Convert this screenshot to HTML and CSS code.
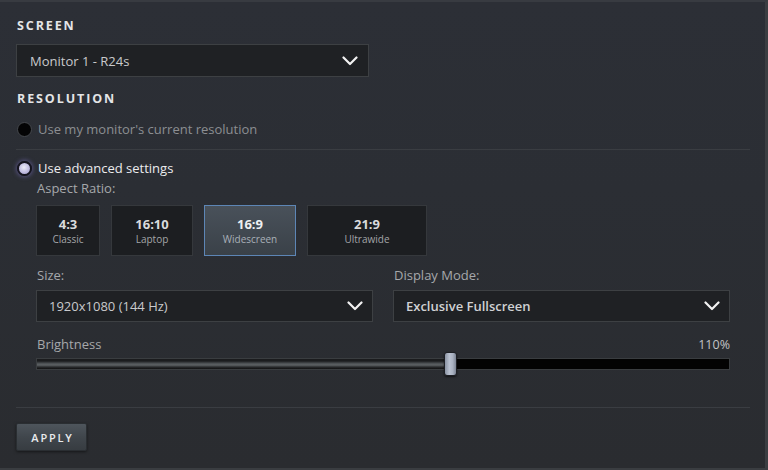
FILE: index.html
```html
<!DOCTYPE html>
<html>
<head>
<meta charset="utf-8">
<link rel="stylesheet" href="styles.css">
</head>
<body>
<div class="panel">
  <div class="heading">SCREEN</div>
  <div class="select select-screen">
    <span>Monitor 1 - R24s</span>
    <svg class="chev" width="16" height="10" viewBox="0 0 16 10"><path d="M1.5 1.5 L8 8 L14.5 1.5" fill="none" stroke="#f2f2f2" stroke-width="2.2" stroke-linecap="round" stroke-linejoin="round"/></svg>
  </div>
  <div class="heading heading-res">RESOLUTION</div>
  <div class="radio-row row-current">
    <span class="radio radio-off"></span>
    <span class="radio-label dim">Use my monitor's current resolution</span>
  </div>
  <div class="sep sep-top"></div>
  <div class="radio-row row-adv">
    <span class="radio radio-on"></span>
    <span class="radio-label">Use advanced settings</span>
  </div>
  <div class="advanced">
    <div class="label">Aspect Ratio:</div>
    <div class="ratios">
      <div class="ratio r43"><b>4:3</b><span>Classic</span></div>
      <div class="ratio r1610"><b>16:10</b><span>Laptop</span></div>
      <div class="ratio r169 selected"><b>16:9</b><span>Widescreen</span></div>
      <div class="ratio r219"><b>21:9</b><span>Ultrawide</span></div>
    </div>
    <div class="two-col">
      <div class="col">
        <div class="label">Size:</div>
        <div class="select select-small">
          <span>1920x1080 (144 Hz)</span>
          <svg class="chev" width="16" height="10" viewBox="0 0 16 10"><path d="M1.5 1.5 L8 8 L14.5 1.5" fill="none" stroke="#f2f2f2" stroke-width="2.2" stroke-linecap="round" stroke-linejoin="round"/></svg>
        </div>
      </div>
      <div class="col">
        <div class="label">Display Mode:</div>
        <div class="select select-small">
          <span class="strong">Exclusive Fullscreen</span>
          <svg class="chev" width="16" height="10" viewBox="0 0 16 10"><path d="M1.5 1.5 L8 8 L14.5 1.5" fill="none" stroke="#f2f2f2" stroke-width="2.2" stroke-linecap="round" stroke-linejoin="round"/></svg>
        </div>
      </div>
    </div>
    <div class="slider-head">
      <span class="label">Brightness</span>
      <span class="pct">110%</span>
    </div>
    <div class="track">
      <div class="fill" style="width: 59.5%"></div>
      <div class="thumb" style="left: 59.5%"></div>
    </div>
  </div>
  <div class="sep sep-bottom"></div>
  <button class="apply">APPLY</button>
</div>
</body>
</html>
```
FILE: styles.css
```css
* { box-sizing: border-box; }
html, body { margin: 0; padding: 0; }
body {
  width: 768px;
  height: 470px;
  overflow: hidden;
  background: #2b2d32;
  font-family: "Open Sans", "Noto Sans", sans-serif;
}
.panel {
  width: 768px;
  height: 470px;
  padding: 17px 0 0 16px;
  background: linear-gradient(180deg, #2c2f36 0%, #2b2e34 40%, #2a2c30 100%);
  border-top: 2px solid #383b41;
  border-right: 3px solid #3b3e42;
  border-bottom: 2px solid #3a3d41;
  position: relative;
}
.heading {
  height: 18px;
  line-height: 18px;
  font-size: 12.5px;
  font-weight: 700;
  letter-spacing: 1.9px;
  color: #e4e5e7;
  margin-top: -2px;
  padding-left: 1px;
}
.select {
  display: flex;
  align-items: center;
  justify-content: space-between;
  background: #1f2124;
  border: 1px solid #3d4043;
  color: #c9cacc;
  font-size: 13px;
}
.select-screen {
  width: 353px;
  height: 33px;
  margin-top: 9px;
  padding: 0 10px 0 13px;
}
.select-small {
  height: 32px;
  padding: 0 9px 0 12px;
  margin-top: 6px;
}
.select .strong { font-weight: 600; color: #d0d1d3; }
.chev { display: block; }
.heading-res { margin-top: 13px; }
.radio-row {
  display: flex;
  align-items: center;
  height: 18px;
  gap: 6px;
  padding-left: 1px;
}
.row-current { margin-top: 12px; }
.row-adv { margin-top: 9px; }
.radio {
  width: 15px;
  height: 15px;
  border-radius: 50%;
  flex: none;
}
.radio-off {
  background: #040405;
  border: 1.5px solid #45484d;
}
.radio-on {
  background: radial-gradient(circle at 45% 40%, #ecebf8 0%, #c9c5e6 45%, #9d97c7 100%);
  border: 2px solid #15141f;
  box-shadow: 0 0 4px 1px rgba(120, 110, 190, 0.55);
}
.radio-label {
  font-size: 13px;
  color: #ececee;
}
.radio-label.dim { color: #8c8e92; }
.sep {
  width: 734px;
  height: 1px;
  background: #3a3d42;
}
.sep-top { margin-top: 11px; }
.advanced {
  padding-left: 20px;
  width: 714px;
}
.label {
  height: 18px;
  line-height: 18px;
  font-size: 13px;
  color: #a6a8ab;
  padding-left: 1px;
}
.advanced > .label:first-child { margin-top: 2px; }
.ratios {
  display: flex;
  gap: 11px;
  margin-top: 8px;
}
.ratio {
  height: 51px;
  display: flex;
  flex-direction: column;
  align-items: center;
  justify-content: center;
  background: #1c1e21;
  border: 1px solid #35383c;
  padding-top: 1px;
}
.ratio b {
  font-size: 13px;
  font-weight: 700;
  color: #d9dadc;
  line-height: 16px;
}
.ratio span {
  font-size: 10px;
  color: #a3a5a8;
  line-height: 14px;
}
.r43 { width: 64px; }
.r1610 { width: 82px; }
.r169 { width: 92px; }
.r219 { width: 120px; }
.ratio.selected {
  background: linear-gradient(180deg, #49515a 0%, #3a4148 100%);
  border-color: #5d86b6;
}
.ratio.selected b { color: #eef0f2; }
.ratio.selected span { color: #a9b0b8; }
.two-col {
  display: grid;
  grid-template-columns: 337px 337px;
  gap: 20px;
  margin-top: 10px;
}
.slider-head {
  display: flex;
  justify-content: space-between;
  align-items: center;
  height: 18px;
  margin-top: 13px;
}
.pct {
  font-size: 12.5px;
  color: #c2c3c5;
}
.track {
  position: relative;
  height: 12px;
  margin-top: 5px;
  background: #030303;
  border: 1px solid #3a3d40;
}
.fill {
  height: 100%;
  background: linear-gradient(180deg, #1b1c1e 0%, #1b1c1e 20%, #4d5154 45%, #5e6265 60%, #2a2c2e 80%, #111 100%);
}
.thumb {
  position: absolute;
  top: -7px;
  width: 13px;
  height: 24px;
  margin-left: -5px;
  border-radius: 3px;
  background: linear-gradient(90deg, #8a93a3 0%, #b9c1d0 40%, #a9b1c1 70%, #7c8494 100%);
  border: 1px solid #1d1f24;
  box-shadow: 0 1px 2px rgba(0,0,0,0.6);
}
.sep-bottom { margin-top: 37px; }
.apply {
  display: block;
  margin-top: 15px;
  width: 71px;
  height: 28px;
  border: 1px solid #2a2e32;
  border-radius: 2px;
  background: linear-gradient(180deg, #4e555c 0%, #40464c 50%, #373c41 100%);
  box-shadow: 0 1px 3px rgba(0,0,0,0.5);
  color: #e9ebed;
  font-family: "Open Sans", "Noto Sans", sans-serif;
  font-size: 11px;
  font-weight: 600;
  letter-spacing: 1.8px;
  padding: 0 0 0 2px;
}
```
